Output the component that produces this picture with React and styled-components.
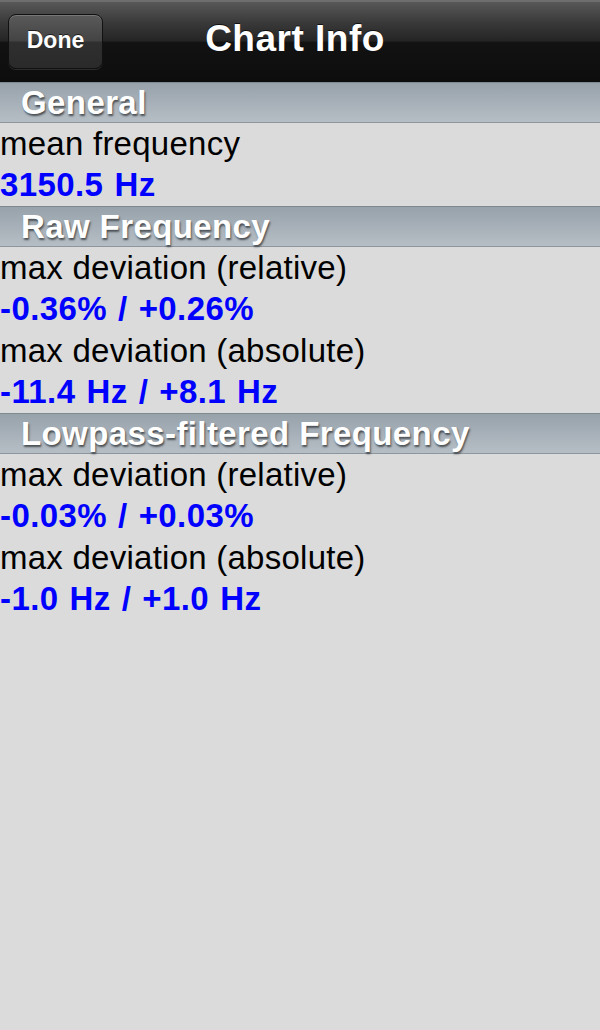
import React from "react";
import styled, { createGlobalStyle } from "styled-components";

const Global = createGlobalStyle`
  html, body { margin: 0; padding: 0; }
  body {
    background: #dbdbdb;
    font-family: Helvetica, "Liberation Sans", Arial, sans-serif;
    -webkit-font-smoothing: antialiased;
  }
`;

const Screen = styled.div`
  width: 600px;
  height: 1030px;
  background: #dbdbdb;
  display: flex;
  flex-direction: column;
  overflow: hidden;
`;

const NavBar = styled.header`
  position: relative;
  height: 82px;
  box-sizing: border-box;
  border-top: 2px solid #6e6e6e;
  background: linear-gradient(
    to bottom,
    #585858 0%,
    #3a3a3a 25%,
    #242424 49%,
    #121212 50%,
    #0d0d0d 100%
  );
  display: flex;
  align-items: center;
  justify-content: center;
  flex: none;
`;

const NavButton = styled.button`
  position: absolute;
  left: 8px;
  top: 12px;
  width: 95px;
  height: 55px;
  box-sizing: border-box;
  border-radius: 8px;
  border: 1px solid #111;
  box-shadow: inset 0 1px 0 rgba(255, 255, 255, 0.18), 0 1px 0 rgba(255, 255, 255, 0.12);
  background: linear-gradient(to bottom, #5a5a5a 0%, #444 48%, #2f2f2f 52%, #2a2a2a 100%);
  color: #fff;
  font-family: Helvetica, "Liberation Sans", Arial, sans-serif;
  font-weight: bold;
  font-size: 23px;
  text-shadow: 0 -1px 0 rgba(0, 0, 0, 0.6);
  padding: 0 0 2px 0;
`;

const Title = styled.h1`
  margin: 0 10px 6px 0;
  color: #fff;
  font-size: 37px;
  font-weight: bold;
  letter-spacing: 0.5px;
  text-shadow: 0 -1px 0 rgba(0, 0, 0, 0.7);
`;

const SectionHeader = styled.div`
  height: 41px;
  box-sizing: border-box;
  border-top: 1px solid #7f8990;
  border-bottom: 1px solid #8d969d;
  background: linear-gradient(to bottom, #97a2aa 0%, #a7b0b8 50%, #b6bec5 100%);
  padding-left: 21px;
  display: flex;
  align-items: center;
  color: #fff;
  font-weight: bold;
  font-size: 33px;
  letter-spacing: 0.4px;
  text-shadow: 1px 2px 2px rgba(40, 45, 50, 0.75);
  flex: none;
`;

const Row = styled.div`
  height: 41.5px;
  display: flex;
  align-items: center;
  font-size: 33px;
  white-space: nowrap;
  flex: none;
  color: ${(p) => (p.$value ? "#0000ff" : "#000")};
  font-weight: ${(p) => (p.$value ? "bold" : "normal")};
  letter-spacing: ${(p) => (p.$value ? "0.4px" : "0.25px")};
  word-spacing: ${(p) => (p.$value ? "1.5px" : "0")};
`;

const sections = [
  {
    title: "General",
    items: [["mean frequency", "3150.5 Hz"]],
  },
  {
    title: "Raw Frequency",
    items: [
      ["max deviation (relative)", "-0.36% / +0.26%"],
      ["max deviation (absolute)", "-11.4 Hz / +8.1 Hz"],
    ],
  },
  {
    title: "Lowpass-filtered Frequency",
    items: [
      ["max deviation (relative)", "-0.03% / +0.03%"],
      ["max deviation (absolute)", "-1.0 Hz / +1.0 Hz"],
    ],
  },
];

export default function App() {
  return (
    <>
      <Global />
      <Screen>
        <NavBar>
          <NavButton>Done</NavButton>
          <Title>Chart Info</Title>
        </NavBar>
        {sections.map((s) => (
          <React.Fragment key={s.title}>
            <SectionHeader>{s.title}</SectionHeader>
            {s.items.map(([label, value], i) => (
              <React.Fragment key={i}>
                <Row>{label}</Row>
                <Row $value>{value}</Row>
              </React.Fragment>
            ))}
          </React.Fragment>
        ))}
      </Screen>
    </>
  );
}
